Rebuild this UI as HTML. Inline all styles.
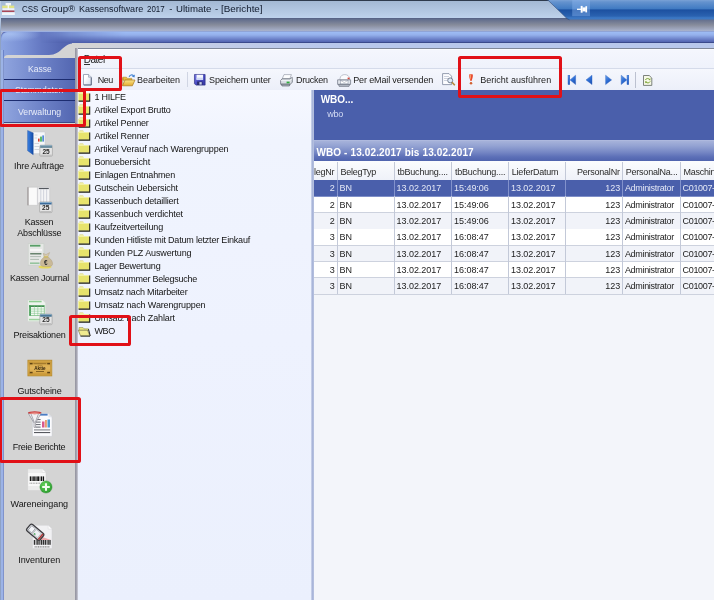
<!DOCTYPE html>
<html><head><meta charset="utf-8"><title>Berichte</title>
<style>
html,body{margin:0;padding:0;}
body{width:714px;height:600px;overflow:hidden;position:relative;background:#fff;font-family:"Liberation Sans",sans-serif;}
.r{position:absolute;}
.t{position:absolute;white-space:nowrap;font-family:"Liberation Sans",sans-serif;}
svg{position:absolute;overflow:visible;}
.red{position:absolute;border:3px solid #e11017;border-radius:2.6px;box-sizing:border-box;}
#w{position:absolute;left:0;top:0;width:714px;height:600px;overflow:hidden;will-change:transform;}
</style></head><body><div id="w">
<div class="r" style="left:0px;top:0px;width:714px;height:19px;background:linear-gradient(#a2b7d2,#bfd3ed);"></div>
<div class="r" style="left:0px;top:0px;width:714px;height:1px;background:#2e3a4c;"></div>
<div class="r" style="left:0px;top:18px;width:714px;height:1px;background:#586486;"></div>
<div class="r" style="left:0px;top:19px;width:714px;height:20px;background:linear-gradient(#5f6b8c 0,#878c9c 6px,#a9b3ce 12px);"></div>
<div class="r" style="left:0px;top:1px;width:1.3px;height:599px;background:linear-gradient(#b9cbe4 0,#b9cbe4 18px,#8fa2c4 32px);"></div>
<div class="r" style="left:1px;top:31px;width:713px;height:569px;background:#5466b2;border-top-left-radius:6px;"></div>
<div class="r" style="left:1px;top:31.5px;width:90px;height:28px;background:linear-gradient(90deg,#8ea6e2 0,#7b92d6 22%,#6478c2 45%,#5466b2 68%,#5062ae 85%,rgba(84,102,178,0) 100%);border-top-left-radius:6px;"></div>
<div class="r" style="left:1.5px;top:32px;width:40px;height:10px;background:radial-gradient(ellipse at 20% 20%,rgba(175,200,245,.75),rgba(160,185,240,0) 70%);border-top-left-radius:6px;"></div>
<div class="r" style="left:40px;top:31px;width:674px;height:12px;background:linear-gradient(#8fa3d4 0px,#9ebcf4 1px,#94b0ec 4px,#5a6cb8 10px,#4d5ea8 12px);-webkit-mask-image:linear-gradient(90deg,transparent 0,rgba(0,0,0,.55) 30px,#000 85px);mask-image:linear-gradient(90deg,transparent 0,rgba(0,0,0,.55) 30px,#000 85px);"></div>
<div class="r" style="left:76px;top:41.8px;width:638px;height:1px;background:#3b4a8c;-webkit-mask-image:linear-gradient(90deg,transparent 0,#000 150px);mask-image:linear-gradient(90deg,transparent 0,#000 150px);"></div>
<div class="r" style="left:1px;top:31px;width:713px;height:1px;background:linear-gradient(90deg,#a8bce8,#8fa3d4 30%);border-top-left-radius:6px;opacity:.9"></div>
<div class="r" style="left:72px;top:42.8px;width:642px;height:5.4px;background:linear-gradient(90deg,#d4d4d8 0,#c4cde6 120px,#b9c8ec 260px);"></div>
<div class="r" style="left:1.3px;top:50px;width:2.9px;height:550px;background:linear-gradient(90deg,#9cb3e6 0,#9cb3e6 62%,#6b83c9 72%);"></div>
<svg style="left:540px;top:0" width="174" height="22" viewBox="0 0 174 22"><defs><linearGradient id="tb" x1="0" y1="0" x2="0" y2="1"><stop offset="0" stop-color="#7aa2d6"/><stop offset="0.1" stop-color="#6492ce"/><stop offset="0.46" stop-color="#3f7ac2"/><stop offset="0.5" stop-color="#1c50a0"/><stop offset="0.82" stop-color="#2a62b0"/><stop offset="0.9" stop-color="#3a76c2"/><stop offset="1" stop-color="#3f7ac4"/></linearGradient></defs><path d="M7,0 L174,0 L174,19.6 L29.5,19.6 C28,19.6 27.6,19 26.8,18.2 L8.4,0.4 Z" fill="url(#tb)"/><path d="M6,0 L8,0.2 L27,18.6 L29.5,19.8" fill="none" stroke="#27406e" stroke-width="1" opacity=".55"/><rect x="32.2" y="0" width="17.8" height="16.2" fill="#8ab4ee" opacity=".42"/><path d="M37,9.3 h4" stroke="#fff" stroke-width="1.3" fill="none"/><rect x="40.7" y="5.9" width="1.9" height="6.8" fill="#fff"/><rect x="42.4" y="7.4" width="3.4" height="4" fill="#fff"/><rect x="45.4" y="6.2" width="1.7" height="6.2" fill="#fff"/></svg>
<svg style="left:0;top:0" width="18" height="18" viewBox="0 0 18 18"><rect x="5.6" y="3" width="5.4" height="2.6" fill="#fbfcfd" opacity=".9"/><rect x="2.2" y="5.6" width="12" height="2.6" fill="#e4e680" opacity=".95"/><rect x="7.6" y="5" width="1.4" height="5" fill="#fff" opacity=".8"/><rect x="2.4" y="8.2" width="12" height="2.2" fill="#f4f6f9" opacity=".9"/><rect x="2" y="10.5" width="12.4" height="1.6" fill="#a83848" opacity=".9"/><rect x="2" y="12.3" width="12.8" height="2.7" fill="#f6f8fb" opacity=".92"/></svg>
<span class="t" style="left:21.70px;top:3.77px;font-size:9.6px;line-height:9.6px;color:#101a2c;transform:scaleX(0.8258);transform-origin:0 0;">CSS</span>
<span class="t" style="left:41.00px;top:3.77px;font-size:9.6px;line-height:9.6px;color:#101a2c;transform:scaleX(1.0162);transform-origin:0 0;">Group®</span>
<span class="t" style="left:78.80px;top:3.77px;font-size:9.6px;line-height:9.6px;color:#101a2c;transform:scaleX(0.9399);transform-origin:0 0;">Kassensoftware</span>
<span class="t" style="left:147.40px;top:3.77px;font-size:9.6px;line-height:9.6px;color:#101a2c;transform:scaleX(0.8241);transform-origin:0 0;">2017</span>
<span class="t" style="left:169.30px;top:3.77px;font-size:9.6px;line-height:9.6px;color:#101a2c;">-</span>
<span class="t" style="left:175.80px;top:3.77px;font-size:9.6px;line-height:9.6px;color:#101a2c;transform:scaleX(1.0026);transform-origin:0 0;">Ultimate</span>
<span class="t" style="left:215.00px;top:3.77px;font-size:9.6px;line-height:9.6px;color:#101a2c;">-</span>
<span class="t" style="left:221.00px;top:3.77px;font-size:9.6px;line-height:9.6px;color:#101a2c;transform:scaleX(1.0258);transform-origin:0 0;">[Berichte]</span>
<svg style="left:0;top:0" width="100" height="600" viewBox="0 0 100 600"><path d="M3.8,600 L3.8,59 Q3.8,55 8,55 L49,55 C62,55 62,43.3 75,43.3 L100,43.3 L100,600 Z" fill="#d4d4d4"/></svg>
<div class="r" style="left:4px;top:58px;width:71px;height:21px;background:linear-gradient(90deg,#8fa4de,#6f84c9 50%,#5366b1);"></div>
<span class="t" style="left:27.80px;top:63.91px;font-size:9.5px;line-height:9.5px;color:#e9edf9;transform:scaleX(0.9014);transform-origin:0 0;">Kasse</span>
<div class="r" style="left:4px;top:79px;width:71px;height:1px;background:#1c2c70;"></div>
<div class="r" style="left:4px;top:80px;width:71px;height:20px;background:linear-gradient(90deg,#8fa4de,#6f84c9 50%,#5366b1);"></div>
<span class="t" style="left:15.30px;top:84.91px;font-size:9.5px;line-height:9.5px;color:#e9edf9;transform:scaleX(0.8949);transform-origin:0 0;">Stammdaten</span>
<div class="r" style="left:4px;top:100px;width:71px;height:1px;background:#1c2c70;"></div>
<div class="r" style="left:4px;top:101px;width:71px;height:22px;background:linear-gradient(90deg,#8fa4de,#6f84c9 50%,#5366b1);"></div>
<span class="t" style="left:18.20px;top:107.41px;font-size:9.5px;line-height:9.5px;color:#e9edf9;transform:scaleX(0.9169);transform-origin:0 0;">Verwaltung</span>
<div class="r" style="left:4px;top:122px;width:71px;height:1px;background:#3a4a8a;"></div>
<span class="t" style="left:14.00px;top:162.38px;font-size:9px;line-height:9px;color:#141414;letter-spacing:-0.118px;">Ihre Aufträge</span>
<span class="t" style="left:24.70px;top:218.38px;font-size:9px;line-height:9px;color:#141414;letter-spacing:-0.237px;">Kassen</span>
<span class="t" style="left:17.30px;top:229.38px;font-size:9px;line-height:9px;color:#141414;letter-spacing:-0.202px;">Abschlüsse</span>
<span class="t" style="left:10.00px;top:274.38px;font-size:9px;line-height:9px;color:#141414;letter-spacing:-0.217px;">Kassen Journal</span>
<span class="t" style="left:13.50px;top:331.38px;font-size:9px;line-height:9px;color:#141414;letter-spacing:-0.195px;">Preisaktionen</span>
<span class="t" style="left:17.50px;top:387.38px;font-size:9px;line-height:9px;color:#141414;letter-spacing:-0.153px;">Gutscheine</span>
<span class="t" style="left:12.75px;top:443.08px;font-size:9px;line-height:9px;color:#141414;letter-spacing:-0.252px;">Freie Berichte</span>
<span class="t" style="left:10.55px;top:499.88px;font-size:9px;line-height:9px;color:#141414;letter-spacing:-0.059px;">Wareneingang</span>
<span class="t" style="left:18.20px;top:555.88px;font-size:9px;line-height:9px;color:#141414;letter-spacing:-0.053px;">Inventuren</span>
<svg style="left:0;top:0" width="80" height="600" viewBox="0 0 80 600"><defs><linearGradient id="bf" x1="0" y1="0" x2="1" y2="0"><stop offset="0" stop-color="#3b82e2"/><stop offset="1" stop-color="#124aa8"/></linearGradient></defs><path d="M33,132 L45,132 L45,153.6 L33,153.6 Z" fill="#f6f7f9" stroke="#c4c8d0" stroke-width="0.5"/><path d="M34.5,135 H37.5 M34.5,138 H37 M34.5,143.5 H39 M34.5,146.5 H39 M34.5,149.5 H39" stroke="#c9ccd4" stroke-width="0.8"/><rect x="38" y="138.6" width="1.6" height="3" fill="#d6402c"/><rect x="40.2" y="136.6" width="1.6" height="5" fill="#3cae48"/><rect x="42.4" y="135.4" width="1.4" height="6.2" fill="#2f72d0"/><path d="M27.6,130.5 L33.2,132.9 L33.2,154.7 L27.6,150.7 Z" fill="url(#bf)" stroke="#1a4a9c" stroke-width="0.4"/><g transform="translate(39.8,144.8)"><rect x="0" y="0.4" width="12.6" height="11.0" rx="1" fill="#e4e4e4" stroke="#9a9a9a" stroke-width="0.6"/><rect x="0.4" y="0.6" width="11.799999999999999" height="2.4" fill="#5a7f92"/><rect x="0.4" y="0.6" width="11.799999999999999" height="0.9" fill="#9fc0d8" opacity=".8"/><rect x="0.6" y="9.8" width="11.4" height="1.2" fill="#bdbdbd"/><text x="6.3" y="9.2" font-family="Liberation Sans" font-weight="bold" font-size="6.6" text-anchor="middle" fill="#2a2a2a">25</text></g><path d="M27.8,187.2 L37.5,187.2 L37.5,205.3 L27.8,205.3 Z" fill="#fafafa" stroke="#bdbdbd" stroke-width="0.5"/><path d="M28,187.2 L28,205.3" stroke="#8c8484" stroke-width="1"/><path d="M37.5,187.2 L49.7,187.2 L49.7,203 L37.5,203 Z" fill="#f4f4f6" stroke="#c0c0c4" stroke-width="0.5"/><rect x="38.8" y="187.9" width="10" height="1.2" fill="#55595f"/><path d="M40.8,189.2 V202 M43.6,189.2 V202 M46.6,189.2 V202" stroke="#c3c7d2" stroke-width="0.7"/><path d="M37.5,187.4 L37.5,205" stroke="#d4d4d8" stroke-width="1.2"/><g transform="translate(39.6,201.5)"><rect x="0" y="0.4" width="12.4" height="10.7" rx="1" fill="#e4e4e4" stroke="#9a9a9a" stroke-width="0.6"/><rect x="0.4" y="0.6" width="11.6" height="2.4" fill="#3b6c9c"/><rect x="0.4" y="0.6" width="11.6" height="0.9" fill="#9fc0d8" opacity=".8"/><rect x="0.6" y="9.5" width="11.200000000000001" height="1.2" fill="#bdbdbd"/><text x="6.2" y="8.899999999999999" font-family="Liberation Sans" font-weight="bold" font-size="6.6" text-anchor="middle" fill="#2a2a2a">25</text></g><rect x="28.2" y="243.8" width="15.7" height="21.3" fill="#e6e8e6" stroke="#c4ccc4" stroke-width="0.5"/><rect x="30" y="244.8" width="10.4" height="1.8" fill="#3e9250" opacity=".85"/><rect x="30" y="249" width="12" height="2.2" fill="#f6f6f6"/><rect x="30.2" y="253" width="11.2" height="1.5" fill="#4a6a50" opacity=".8"/><path d="M30.2,256.6 H41 M30.2,259.4 H39" stroke="#a9b5ab" stroke-width="0.9"/><rect x="30" y="262.6" width="9.5" height="1.1" fill="#56a866" opacity=".8"/><ellipse cx="45" cy="267" rx="6.6" ry="1.6" fill="#e6d85a"/><path d="M44.6,257 C41.5,258.4 39.8,262 40.6,264.6 C41.2,266.4 43,266.6 46.4,266.6 C49.8,266.6 52,266.4 52.5,264.4 C53,261.6 50.4,258.2 47.6,257 Z" fill="#c9b998" stroke="#a8977a" stroke-width="0.4"/><path d="M44.4,256.8 L43.2,253.4 L46,254.6 L49.6,252.6 L47.8,256.8 Z" fill="#d8cbb0" stroke="#a8977a" stroke-width="0.4"/><rect x="43.8" y="256.4" width="4.4" height="1" fill="#d9c24e"/><text x="45.8" y="264.6" font-family="Liberation Sans" font-weight="bold" font-size="6.4" text-anchor="middle" fill="#2c2c2c">€</text><path d="M27.9,300 L42.6,300 L45.7,303 L45.7,321.5 L27.9,321.5 Z" fill="#eef3ee" stroke="#cdd6cd" stroke-width="0.5"/><rect x="29" y="300.8" width="12.6" height="1.5" fill="#8fce92"/><rect x="29" y="318.8" width="14" height="1.5" fill="#9bd29c"/><rect x="29.4" y="305.6" width="14.8" height="10" fill="#f4faf4" stroke="#5cae66" stroke-width="0.6"/><rect x="29.4" y="305.6" width="14.8" height="1.3" fill="#2f7e40"/><rect x="29.4" y="305.6" width="1.5" height="10" fill="#3c9650"/><path d="M29.4,309 H44.2 M29.4,311.2 H44.2 M29.4,313.4 H44.2 M34.4,305.6 V315.6 M37.8,305.6 V315.6 M41.2,305.6 V315.6" stroke="#7cc084" stroke-width="0.5"/><g transform="translate(39.8,313.7)"><rect x="0" y="0.4" width="12.3" height="10.6" rx="1" fill="#e4e4e4" stroke="#9a9a9a" stroke-width="0.6"/><rect x="0.4" y="0.6" width="11.5" height="2.4" fill="#3b6b8c"/><rect x="0.4" y="0.6" width="11.5" height="0.9" fill="#9fc0d8" opacity=".8"/><rect x="0.6" y="9.4" width="11.100000000000001" height="1.2" fill="#bdbdbd"/><text x="6.15" y="8.8" font-family="Liberation Sans" font-weight="bold" font-size="6.6" text-anchor="middle" fill="#2a2a2a">25</text></g><defs><linearGradient id="gv" x1="0" y1="0" x2="0" y2="1"><stop offset="0" stop-color="#cfa040"/><stop offset="0.5" stop-color="#e2b65a"/><stop offset="1" stop-color="#cf9c3a"/></linearGradient></defs><rect x="27.9" y="360.2" width="23.9" height="15.7" fill="url(#gv)" stroke="#b98c2c" stroke-width="0.8"/><rect x="29.4" y="362.2" width="20.9" height="11.8" fill="none" stroke="#b88a2e" stroke-width="0.5"/><path d="M33.4,363.7 H46.4" stroke="#7a5818" stroke-width="0.7"/><path d="M37.6,365.3 H42.4" stroke="#8a6420" stroke-width="0.5"/><text x="39.9" y="370" font-family="Liberation Sans" font-weight="bold" font-size="4.6" text-anchor="middle" fill="#2c1e0a">Aktie</text><path d="M36,371.5 H44" stroke="#6e4e16" stroke-width="0.8"/><g fill="#5e4212"><rect x="29.8" y="362.9" width="2.8" height="1.5"/><rect x="47.2" y="362.9" width="2.8" height="1.5"/><rect x="29.8" y="371.8" width="2.8" height="1.5"/><rect x="47.2" y="371.8" width="2.8" height="1.5"/></g><path d="M32.5,413.6 L48.4,413.6 L52,417.2 L52,436.3 L32.5,436.3 Z" fill="#fbfbfd" stroke="#c8ccd4" stroke-width="0.5"/><path d="M48.4,413.6 L48.4,417.2 L52,417.2 Z" fill="#e2e4ea"/><rect x="40" y="413.8" width="7.6" height="1.8" fill="#4a7cc4"/><rect x="42" y="421.5" width="2.5" height="6" fill="#d85a8c"/><rect x="45" y="420" width="1.9" height="7.5" fill="#e8a070"/><rect x="47.5" y="419.5" width="2.5" height="8" fill="#4a9ad2"/><path d="M35.6,419.6 H40.6 M35.6,422.1 H40.6 M35.6,424.6 H40.6 M35.6,427.1 H40.6" stroke="#50545c" stroke-width="0.9"/><rect x="34" y="429.2" width="16.2" height="1.4" fill="#9a9ca2"/><rect x="34" y="432" width="16.2" height="1.1" fill="#585a60"/><path d="M28.2,413 L41.2,413 L35.6,423 L35.6,427.4 L34,427.4 L34,423 Z" fill="#f1f1f4" stroke="#7c7c86" stroke-width="0.6"/><path d="M31,414 L34.4,422.6 M38.4,414 L35.2,422.6" stroke="#8a8a94" stroke-width="0.7"/><ellipse cx="34.7" cy="412.8" rx="6.8" ry="1.5" fill="#cc3c3c"/><ellipse cx="34.7" cy="413.1" rx="5" ry="0.7" fill="#f0b0a8"/><path d="M27.6,468.7 L42.2,468.7 L46,472.5 L46,490.6 L27.6,490.6 Z" fill="#ececec" stroke="#cfcfcf" stroke-width="0.5"/><path d="M28.4,473 L45.4,473 L45.4,486 L28.4,486 Z" fill="#f8f8f8"/><path d="M42.2,468.7 L42.2,472.5 L46,472.5 Z" fill="#fafafa" stroke="#d4d4d4" stroke-width="0.4"/><g fill="#121212"><rect x="29.8" y="476.4" width="1.5" height="4.6"/><rect x="31.8" y="476.4" width="0.8" height="4.6"/><rect x="33.2" y="476.4" width="1.6" height="4.6"/><rect x="35.4" y="476.4" width="1.2" height="4.6"/><rect x="37.2" y="476.4" width="1.8" height="4.6"/><rect x="39.6" y="476.4" width="0.8" height="4.6"/><rect x="41" y="476.4" width="1.2" height="4.6"/><rect x="42.8" y="476.4" width="1.3" height="4.6"/></g><path d="M29.6,483.2 H40" stroke="#8c8c8c" stroke-width="1" stroke-dasharray="0.9,0.7"/><defs><radialGradient id="gp" cx="0.4" cy="0.35" r="0.7"><stop offset="0" stop-color="#6ad45e"/><stop offset="1" stop-color="#279a2c"/></radialGradient></defs><circle cx="46" cy="487" r="6.1" fill="url(#gp)" stroke="#2a8a2e" stroke-width="0.4"/><path d="M46,483.2 V490.8 M42.2,487 H49.8" stroke="#f2fbf0" stroke-width="2"/><path d="M32.5,525.3 L48.2,525.3 L52,529.1 L52,548.6 L32.5,548.6 Z" fill="#f1f1f3" stroke="#d0d0d4" stroke-width="0.5"/><path d="M48.2,525.3 L48.2,529.1 L52,529.1 Z" fill="#fdfdfd" stroke="#d4d4d8" stroke-width="0.4"/><path d="M39.5,536 L51,540 L35,540 Z" fill="#e88c8c" opacity=".7"/><g fill="#303030"><rect x="33.8" y="540" width="1.3" height="4.8"/><rect x="35.8" y="540" width="0.8" height="4.8"/><rect x="37.2" y="540" width="1.4" height="4.8"/><rect x="39.2" y="540" width="0.7" height="4.8"/><rect x="40.6" y="540" width="1.8" height="4.8"/><rect x="43" y="540" width="1" height="4.8"/><rect x="44.6" y="540" width="1.6" height="4.8"/><rect x="46.8" y="540" width="0.8" height="4.8"/><rect x="48.2" y="540" width="1.5" height="4.8"/><rect x="50.2" y="540" width="0.7" height="4.8"/></g><path d="M34.6,546.8 H50" stroke="#808080" stroke-width="1.2" stroke-dasharray="1.1,0.6"/><g transform="translate(35.2,532.2) rotate(40)"><rect x="-8.6" y="-4.3" width="17.2" height="8.6" rx="2" fill="#dfe3e8" stroke="#3c3c40" stroke-width="1.3"/><rect x="-6.8" y="-2.8" width="4.6" height="5.6" fill="#f4f6fa" stroke="#6a6a70" stroke-width="0.5"/><rect x="-1" y="-2.8" width="6.4" height="5.6" fill="#eef0f4" stroke="#8a8a90" stroke-width="0.4"/><rect x="0" y="1" width="1.6" height="1.4" fill="#3ca04a"/><rect x="6.2" y="-3.6" width="1.6" height="7.2" fill="#b03a3a"/></g></svg>
<div class="r" style="left:76px;top:48px;width:638px;height:552px;background:#fbfcff;"></div>
<div class="r" style="left:76px;top:47.5px;width:638px;height:1.4px;background:#80889a;"></div>
<div class="r" style="left:75.3px;top:48px;width:2.3px;height:552px;background:linear-gradient(90deg,#92929e 0,#adadb8 70%,#d8dae8 100%);"></div>
<div class="r" style="left:77.5px;top:49px;width:636.5px;height:19px;background:linear-gradient(#ffffff 0,#f4f6fd 1.5px,#eff2fb 100%);"></div>
<span class="t" style="left:83.70px;top:54.73px;font-size:10px;line-height:10px;color:#1a1a1a;letter-spacing:-0.469px;">Datei</span>
<div class="r" style="left:83.8px;top:63.8px;width:6px;height:1px;background:#333;"></div>
<div class="r" style="left:77.5px;top:68px;width:636.5px;height:1px;background:#d5dbea;"></div>
<div class="r" style="left:77.5px;top:69px;width:636.5px;height:21px;background:linear-gradient(#f5f7fd,#eceff9);"></div>
<div class="r" style="left:77.5px;top:89.6px;width:636.5px;height:0.8px;background:#dfe4f2;"></div>
<span class="t" style="left:97.70px;top:75.78px;font-size:9px;line-height:9px;color:#222;letter-spacing:-0.437px;">Neu</span>
<span class="t" style="left:137.00px;top:75.78px;font-size:9px;line-height:9px;color:#222;letter-spacing:-0.053px;">Bearbeiten</span>
<div class="r" style="left:186.6px;top:72px;width:1.4px;height:15px;background:#d0d5e3;"></div>
<span class="t" style="left:209.00px;top:75.78px;font-size:9px;line-height:9px;color:#222;letter-spacing:-0.123px;">Speichern unter</span>
<span class="t" style="left:295.90px;top:75.78px;font-size:9px;line-height:9px;color:#222;letter-spacing:-0.216px;">Drucken</span>
<span class="t" style="left:353.20px;top:75.78px;font-size:9px;line-height:9px;color:#222;letter-spacing:-0.134px;">Per eMail versenden</span>
<span class="t" style="left:480.20px;top:75.78px;font-size:9px;line-height:9px;color:#222;letter-spacing:0.027px;">Bericht ausführen</span>
<div class="r" style="left:635px;top:71.6px;width:1.1px;height:16px;background:#bcc1d0;"></div>
<div class="r" style="left:77.5px;top:90.3px;width:234px;height:509.7px;background:linear-gradient(#f6f8ff 0,#f0f4fe 50px,#eef2fe 250px,#ebf0fd 100%);"></div>
<div class="r" style="left:311px;top:90.3px;width:3px;height:509.7px;background:linear-gradient(90deg,#cfd8ee,#a9b5d9 50%,#b7c2e0);"></div>
<span class="t" style="left:94.40px;top:92.68px;font-size:9px;line-height:9px;color:#141414;letter-spacing:-0.245px;">1 HILFE</span>
<svg style="left:77.6px;top:90.60px" width="12.4" height="10.6" viewBox="0 0 12.4 10.6"><path d="M0.9,2.4 L1.7,0.5 L5.2,0.5 L6.3,2.2 Z" fill="#f1eea2"/><path d="M0.2,2.1 L11.3,2.1 L11.3,9.8 L0.2,9.8 Z" fill="#e7e36c"/><path d="M0.5,9.6 L0.5,2.5 L11,2.5" fill="none" stroke="#f5f3b8" stroke-width="0.7"/><path d="M1,1.6 L1.8,0.5 L5.1,0.5" fill="none" stroke="#d9d59a" stroke-width="0.5"/><path d="M11.7,2.6 L11.7,10.1 L0.6,10.1" fill="none" stroke="#1c1c14" stroke-width="1.1"/></svg>
<span class="t" style="left:94.40px;top:105.71px;font-size:9px;line-height:9px;color:#141414;letter-spacing:-0.182px;">Artikel Export Brutto</span>
<svg style="left:77.6px;top:103.63px" width="12.4" height="10.6" viewBox="0 0 12.4 10.6"><path d="M0.9,2.4 L1.7,0.5 L5.2,0.5 L6.3,2.2 Z" fill="#f1eea2"/><path d="M0.2,2.1 L11.3,2.1 L11.3,9.8 L0.2,9.8 Z" fill="#e7e36c"/><path d="M0.5,9.6 L0.5,2.5 L11,2.5" fill="none" stroke="#f5f3b8" stroke-width="0.7"/><path d="M1,1.6 L1.8,0.5 L5.1,0.5" fill="none" stroke="#d9d59a" stroke-width="0.5"/><path d="M11.7,2.6 L11.7,10.1 L0.6,10.1" fill="none" stroke="#1c1c14" stroke-width="1.1"/></svg>
<span class="t" style="left:94.40px;top:118.74px;font-size:9px;line-height:9px;color:#141414;letter-spacing:-0.159px;">Artikel Penner</span>
<svg style="left:77.6px;top:116.66px" width="12.4" height="10.6" viewBox="0 0 12.4 10.6"><path d="M0.9,2.4 L1.7,0.5 L5.2,0.5 L6.3,2.2 Z" fill="#f1eea2"/><path d="M0.2,2.1 L11.3,2.1 L11.3,9.8 L0.2,9.8 Z" fill="#e7e36c"/><path d="M0.5,9.6 L0.5,2.5 L11,2.5" fill="none" stroke="#f5f3b8" stroke-width="0.7"/><path d="M1,1.6 L1.8,0.5 L5.1,0.5" fill="none" stroke="#d9d59a" stroke-width="0.5"/><path d="M11.7,2.6 L11.7,10.1 L0.6,10.1" fill="none" stroke="#1c1c14" stroke-width="1.1"/></svg>
<span class="t" style="left:94.40px;top:131.77px;font-size:9px;line-height:9px;color:#141414;letter-spacing:-0.159px;">Artikel Renner</span>
<svg style="left:77.6px;top:129.69px" width="12.4" height="10.6" viewBox="0 0 12.4 10.6"><path d="M0.9,2.4 L1.7,0.5 L5.2,0.5 L6.3,2.2 Z" fill="#f1eea2"/><path d="M0.2,2.1 L11.3,2.1 L11.3,9.8 L0.2,9.8 Z" fill="#e7e36c"/><path d="M0.5,9.6 L0.5,2.5 L11,2.5" fill="none" stroke="#f5f3b8" stroke-width="0.7"/><path d="M1,1.6 L1.8,0.5 L5.1,0.5" fill="none" stroke="#d9d59a" stroke-width="0.5"/><path d="M11.7,2.6 L11.7,10.1 L0.6,10.1" fill="none" stroke="#1c1c14" stroke-width="1.1"/></svg>
<span class="t" style="left:94.40px;top:144.80px;font-size:9px;line-height:9px;color:#141414;letter-spacing:-0.098px;">Artikel Verauf nach Warengruppen</span>
<svg style="left:77.6px;top:142.72px" width="12.4" height="10.6" viewBox="0 0 12.4 10.6"><path d="M0.9,2.4 L1.7,0.5 L5.2,0.5 L6.3,2.2 Z" fill="#f1eea2"/><path d="M0.2,2.1 L11.3,2.1 L11.3,9.8 L0.2,9.8 Z" fill="#e7e36c"/><path d="M0.5,9.6 L0.5,2.5 L11,2.5" fill="none" stroke="#f5f3b8" stroke-width="0.7"/><path d="M1,1.6 L1.8,0.5 L5.1,0.5" fill="none" stroke="#d9d59a" stroke-width="0.5"/><path d="M11.7,2.6 L11.7,10.1 L0.6,10.1" fill="none" stroke="#1c1c14" stroke-width="1.1"/></svg>
<span class="t" style="left:94.40px;top:157.83px;font-size:9px;line-height:9px;color:#141414;letter-spacing:-0.149px;">Bonuebersicht</span>
<svg style="left:77.6px;top:155.75px" width="12.4" height="10.6" viewBox="0 0 12.4 10.6"><path d="M0.9,2.4 L1.7,0.5 L5.2,0.5 L6.3,2.2 Z" fill="#f1eea2"/><path d="M0.2,2.1 L11.3,2.1 L11.3,9.8 L0.2,9.8 Z" fill="#e7e36c"/><path d="M0.5,9.6 L0.5,2.5 L11,2.5" fill="none" stroke="#f5f3b8" stroke-width="0.7"/><path d="M1,1.6 L1.8,0.5 L5.1,0.5" fill="none" stroke="#d9d59a" stroke-width="0.5"/><path d="M11.7,2.6 L11.7,10.1 L0.6,10.1" fill="none" stroke="#1c1c14" stroke-width="1.1"/></svg>
<span class="t" style="left:94.40px;top:170.86px;font-size:9px;line-height:9px;color:#141414;letter-spacing:-0.165px;">Einlagen Entnahmen</span>
<svg style="left:77.6px;top:168.78px" width="12.4" height="10.6" viewBox="0 0 12.4 10.6"><path d="M0.9,2.4 L1.7,0.5 L5.2,0.5 L6.3,2.2 Z" fill="#f1eea2"/><path d="M0.2,2.1 L11.3,2.1 L11.3,9.8 L0.2,9.8 Z" fill="#e7e36c"/><path d="M0.5,9.6 L0.5,2.5 L11,2.5" fill="none" stroke="#f5f3b8" stroke-width="0.7"/><path d="M1,1.6 L1.8,0.5 L5.1,0.5" fill="none" stroke="#d9d59a" stroke-width="0.5"/><path d="M11.7,2.6 L11.7,10.1 L0.6,10.1" fill="none" stroke="#1c1c14" stroke-width="1.1"/></svg>
<span class="t" style="left:94.40px;top:183.89px;font-size:9px;line-height:9px;color:#141414;letter-spacing:-0.122px;">Gutschein Uebersicht</span>
<svg style="left:77.6px;top:181.81px" width="12.4" height="10.6" viewBox="0 0 12.4 10.6"><path d="M0.9,2.4 L1.7,0.5 L5.2,0.5 L6.3,2.2 Z" fill="#f1eea2"/><path d="M0.2,2.1 L11.3,2.1 L11.3,9.8 L0.2,9.8 Z" fill="#e7e36c"/><path d="M0.5,9.6 L0.5,2.5 L11,2.5" fill="none" stroke="#f5f3b8" stroke-width="0.7"/><path d="M1,1.6 L1.8,0.5 L5.1,0.5" fill="none" stroke="#d9d59a" stroke-width="0.5"/><path d="M11.7,2.6 L11.7,10.1 L0.6,10.1" fill="none" stroke="#1c1c14" stroke-width="1.1"/></svg>
<span class="t" style="left:94.40px;top:196.92px;font-size:9px;line-height:9px;color:#141414;letter-spacing:-0.180px;">Kassenbuch detailliert</span>
<svg style="left:77.6px;top:194.84px" width="12.4" height="10.6" viewBox="0 0 12.4 10.6"><path d="M0.9,2.4 L1.7,0.5 L5.2,0.5 L6.3,2.2 Z" fill="#f1eea2"/><path d="M0.2,2.1 L11.3,2.1 L11.3,9.8 L0.2,9.8 Z" fill="#e7e36c"/><path d="M0.5,9.6 L0.5,2.5 L11,2.5" fill="none" stroke="#f5f3b8" stroke-width="0.7"/><path d="M1,1.6 L1.8,0.5 L5.1,0.5" fill="none" stroke="#d9d59a" stroke-width="0.5"/><path d="M11.7,2.6 L11.7,10.1 L0.6,10.1" fill="none" stroke="#1c1c14" stroke-width="1.1"/></svg>
<span class="t" style="left:94.40px;top:209.95px;font-size:9px;line-height:9px;color:#141414;letter-spacing:-0.117px;">Kassenbuch verdichtet</span>
<svg style="left:77.6px;top:207.87px" width="12.4" height="10.6" viewBox="0 0 12.4 10.6"><path d="M0.9,2.4 L1.7,0.5 L5.2,0.5 L6.3,2.2 Z" fill="#f1eea2"/><path d="M0.2,2.1 L11.3,2.1 L11.3,9.8 L0.2,9.8 Z" fill="#e7e36c"/><path d="M0.5,9.6 L0.5,2.5 L11,2.5" fill="none" stroke="#f5f3b8" stroke-width="0.7"/><path d="M1,1.6 L1.8,0.5 L5.1,0.5" fill="none" stroke="#d9d59a" stroke-width="0.5"/><path d="M11.7,2.6 L11.7,10.1 L0.6,10.1" fill="none" stroke="#1c1c14" stroke-width="1.1"/></svg>
<span class="t" style="left:94.40px;top:222.98px;font-size:9px;line-height:9px;color:#141414;letter-spacing:-0.164px;">Kaufzeitverteilung</span>
<svg style="left:77.6px;top:220.90px" width="12.4" height="10.6" viewBox="0 0 12.4 10.6"><path d="M0.9,2.4 L1.7,0.5 L5.2,0.5 L6.3,2.2 Z" fill="#f1eea2"/><path d="M0.2,2.1 L11.3,2.1 L11.3,9.8 L0.2,9.8 Z" fill="#e7e36c"/><path d="M0.5,9.6 L0.5,2.5 L11,2.5" fill="none" stroke="#f5f3b8" stroke-width="0.7"/><path d="M1,1.6 L1.8,0.5 L5.1,0.5" fill="none" stroke="#d9d59a" stroke-width="0.5"/><path d="M11.7,2.6 L11.7,10.1 L0.6,10.1" fill="none" stroke="#1c1c14" stroke-width="1.1"/></svg>
<span class="t" style="left:94.40px;top:236.01px;font-size:9px;line-height:9px;color:#141414;letter-spacing:-0.194px;">Kunden Hitliste mit Datum letzter Einkauf</span>
<svg style="left:77.6px;top:233.93px" width="12.4" height="10.6" viewBox="0 0 12.4 10.6"><path d="M0.9,2.4 L1.7,0.5 L5.2,0.5 L6.3,2.2 Z" fill="#f1eea2"/><path d="M0.2,2.1 L11.3,2.1 L11.3,9.8 L0.2,9.8 Z" fill="#e7e36c"/><path d="M0.5,9.6 L0.5,2.5 L11,2.5" fill="none" stroke="#f5f3b8" stroke-width="0.7"/><path d="M1,1.6 L1.8,0.5 L5.1,0.5" fill="none" stroke="#d9d59a" stroke-width="0.5"/><path d="M11.7,2.6 L11.7,10.1 L0.6,10.1" fill="none" stroke="#1c1c14" stroke-width="1.1"/></svg>
<span class="t" style="left:94.40px;top:249.04px;font-size:9px;line-height:9px;color:#141414;letter-spacing:-0.118px;">Kunden PLZ Auswertung</span>
<svg style="left:77.6px;top:246.96px" width="12.4" height="10.6" viewBox="0 0 12.4 10.6"><path d="M0.9,2.4 L1.7,0.5 L5.2,0.5 L6.3,2.2 Z" fill="#f1eea2"/><path d="M0.2,2.1 L11.3,2.1 L11.3,9.8 L0.2,9.8 Z" fill="#e7e36c"/><path d="M0.5,9.6 L0.5,2.5 L11,2.5" fill="none" stroke="#f5f3b8" stroke-width="0.7"/><path d="M1,1.6 L1.8,0.5 L5.1,0.5" fill="none" stroke="#d9d59a" stroke-width="0.5"/><path d="M11.7,2.6 L11.7,10.1 L0.6,10.1" fill="none" stroke="#1c1c14" stroke-width="1.1"/></svg>
<span class="t" style="left:94.40px;top:262.07px;font-size:9px;line-height:9px;color:#141414;letter-spacing:-0.163px;">Lager Bewertung</span>
<svg style="left:77.6px;top:259.99px" width="12.4" height="10.6" viewBox="0 0 12.4 10.6"><path d="M0.9,2.4 L1.7,0.5 L5.2,0.5 L6.3,2.2 Z" fill="#f1eea2"/><path d="M0.2,2.1 L11.3,2.1 L11.3,9.8 L0.2,9.8 Z" fill="#e7e36c"/><path d="M0.5,9.6 L0.5,2.5 L11,2.5" fill="none" stroke="#f5f3b8" stroke-width="0.7"/><path d="M1,1.6 L1.8,0.5 L5.1,0.5" fill="none" stroke="#d9d59a" stroke-width="0.5"/><path d="M11.7,2.6 L11.7,10.1 L0.6,10.1" fill="none" stroke="#1c1c14" stroke-width="1.1"/></svg>
<span class="t" style="left:94.40px;top:275.10px;font-size:9px;line-height:9px;color:#141414;letter-spacing:-0.259px;">Seriennummer Belegsuche</span>
<svg style="left:77.6px;top:273.02px" width="12.4" height="10.6" viewBox="0 0 12.4 10.6"><path d="M0.9,2.4 L1.7,0.5 L5.2,0.5 L6.3,2.2 Z" fill="#f1eea2"/><path d="M0.2,2.1 L11.3,2.1 L11.3,9.8 L0.2,9.8 Z" fill="#e7e36c"/><path d="M0.5,9.6 L0.5,2.5 L11,2.5" fill="none" stroke="#f5f3b8" stroke-width="0.7"/><path d="M1,1.6 L1.8,0.5 L5.1,0.5" fill="none" stroke="#d9d59a" stroke-width="0.5"/><path d="M11.7,2.6 L11.7,10.1 L0.6,10.1" fill="none" stroke="#1c1c14" stroke-width="1.1"/></svg>
<span class="t" style="left:94.40px;top:288.13px;font-size:9px;line-height:9px;color:#141414;letter-spacing:-0.193px;">Umsatz nach Mitarbeiter</span>
<svg style="left:77.6px;top:286.05px" width="12.4" height="10.6" viewBox="0 0 12.4 10.6"><path d="M0.9,2.4 L1.7,0.5 L5.2,0.5 L6.3,2.2 Z" fill="#f1eea2"/><path d="M0.2,2.1 L11.3,2.1 L11.3,9.8 L0.2,9.8 Z" fill="#e7e36c"/><path d="M0.5,9.6 L0.5,2.5 L11,2.5" fill="none" stroke="#f5f3b8" stroke-width="0.7"/><path d="M1,1.6 L1.8,0.5 L5.1,0.5" fill="none" stroke="#d9d59a" stroke-width="0.5"/><path d="M11.7,2.6 L11.7,10.1 L0.6,10.1" fill="none" stroke="#1c1c14" stroke-width="1.1"/></svg>
<span class="t" style="left:94.40px;top:301.16px;font-size:9px;line-height:9px;color:#141414;letter-spacing:-0.130px;">Umsatz nach Warengruppen</span>
<svg style="left:77.6px;top:299.08px" width="12.4" height="10.6" viewBox="0 0 12.4 10.6"><path d="M0.9,2.4 L1.7,0.5 L5.2,0.5 L6.3,2.2 Z" fill="#f1eea2"/><path d="M0.2,2.1 L11.3,2.1 L11.3,9.8 L0.2,9.8 Z" fill="#e7e36c"/><path d="M0.5,9.6 L0.5,2.5 L11,2.5" fill="none" stroke="#f5f3b8" stroke-width="0.7"/><path d="M1,1.6 L1.8,0.5 L5.1,0.5" fill="none" stroke="#d9d59a" stroke-width="0.5"/><path d="M11.7,2.6 L11.7,10.1 L0.6,10.1" fill="none" stroke="#1c1c14" stroke-width="1.1"/></svg>
<span class="t" style="left:94.40px;top:314.19px;font-size:9px;line-height:9px;color:#141414;letter-spacing:-0.128px;">Umsatz nach Zahlart</span>
<svg style="left:77.6px;top:312.11px" width="12.4" height="10.6" viewBox="0 0 12.4 10.6"><path d="M0.9,2.4 L1.7,0.5 L5.2,0.5 L6.3,2.2 Z" fill="#f1eea2"/><path d="M0.2,2.1 L11.3,2.1 L11.3,9.8 L0.2,9.8 Z" fill="#e7e36c"/><path d="M0.5,9.6 L0.5,2.5 L11,2.5" fill="none" stroke="#f5f3b8" stroke-width="0.7"/><path d="M1,1.6 L1.8,0.5 L5.1,0.5" fill="none" stroke="#d9d59a" stroke-width="0.5"/><path d="M11.7,2.6 L11.7,10.1 L0.6,10.1" fill="none" stroke="#1c1c14" stroke-width="1.1"/></svg>
<span class="t" style="left:94.40px;top:327.22px;font-size:9px;line-height:9px;color:#141414;letter-spacing:-0.299px;">WBO</span>
<svg style="left:77.8px;top:325.94px" width="13" height="11" viewBox="0 0 13 11"><path d="M1,1.5 L5,1.5 L6,2.8 L10.5,2.8 L10.5,4.5 L1,4.5 Z" fill="#e9e47a" stroke="#8a8650" stroke-width="0.5"/><path d="M0.3,4.2 L9.5,4.2 L11.8,9.8 L2.5,9.8 Z" fill="#f0eb90" stroke="#6a6640" stroke-width="0.6"/><path d="M10.5,3.2 L12.2,9.8 L11.8,10.2" fill="none" stroke="#2a2a22" stroke-width="1"/><path d="M2.5,10.2 L12,10.2" fill="none" stroke="#2a2a22" stroke-width="0.9"/></svg>
<div class="r" style="left:313.9px;top:90.2px;width:400.1px;height:49.8px;background:#4a5fab;"></div>
<span class="t" style="left:320.70px;top:94.94px;font-size:10px;line-height:10px;color:#fff;font-weight:bold;letter-spacing:-0.046px;">WBO...</span>
<span class="t" style="left:327.20px;top:110.18px;font-size:9px;line-height:9px;color:#d4dcf4;letter-spacing:-0.170px;">wbo</span>
<div class="r" style="left:313.9px;top:139.6px;width:400.1px;height:1.2px;background:#aeb9de;"></div>
<div class="r" style="left:313.9px;top:140.6px;width:400.1px;height:20.6px;background:linear-gradient(#a6b2da 0,#93a2d2 25%,#7788c5 55%,#5c6fb7 80%,#5064ae 100%);"></div>
<span class="t" style="left:316.40px;top:147.63px;font-size:10px;line-height:10px;color:#fff;font-weight:bold;letter-spacing:0.128px;">WBO - 13.02.2017 bis 13.02.2017</span>
<div class="r" style="left:313.9px;top:161.3px;width:400.1px;height:19px;background:linear-gradient(#fbfcfe,#eff2f9);"></div>
<div class="r" style="left:314px;top:179.8px;width:400px;height:0.7px;background:#c9cfdd;"></div>
<span class="t" style="left:313.97px;top:168.48px;font-size:9px;line-height:9px;color:#2a2a2a;letter-spacing:-0.215px;">legNr</span>
<span class="t" style="left:340.40px;top:168.48px;font-size:9px;line-height:9px;color:#2a2a2a;letter-spacing:-0.235px;">BelegTyp</span>
<span class="t" style="left:397.40px;top:168.48px;font-size:9px;line-height:9px;color:#2a2a2a;letter-spacing:-0.204px;">tbBuchung....</span>
<span class="t" style="left:454.90px;top:168.48px;font-size:9px;line-height:9px;color:#2a2a2a;letter-spacing:-0.204px;">tbBuchung....</span>
<span class="t" style="left:511.80px;top:168.48px;font-size:9px;line-height:9px;color:#2a2a2a;letter-spacing:-0.223px;">LieferDatum</span>
<span class="t" style="left:576.93px;top:168.48px;font-size:9px;line-height:9px;color:#2a2a2a;letter-spacing:-0.225px;">PersonalNr</span>
<span class="t" style="left:625.70px;top:168.48px;font-size:9px;line-height:9px;color:#2a2a2a;letter-spacing:-0.210px;">PersonalNa...</span>
<span class="t" style="left:683.40px;top:168.48px;font-size:9px;line-height:9px;color:#2a2a2a;letter-spacing:-0.239px;">Maschin</span>
<div class="r" style="left:314px;top:294px;width:400px;height:306px;background:#f3f5fa;"></div>
<div class="r" style="left:314px;top:180.40px;width:400px;height:16.3px;background:#4a5fab;"></div>
<div class="r" style="left:314px;top:195.90px;width:400px;height:0.8px;background:#7f8fc8;"></div>
<span class="t" style="left:329.79px;top:184.38px;font-size:9px;line-height:9px;color:#e4e8f6;">2</span>
<span class="t" style="left:339.60px;top:184.38px;font-size:9px;line-height:9px;color:#e4e8f6;letter-spacing:-0.075px;">BN</span>
<span class="t" style="left:396.60px;top:184.38px;font-size:9px;line-height:9px;color:#e4e8f6;letter-spacing:-0.054px;">13.02.2017</span>
<span class="t" style="left:454.10px;top:184.38px;font-size:9px;line-height:9px;color:#e4e8f6;letter-spacing:-0.053px;">15:49:06</span>
<span class="t" style="left:511.00px;top:184.38px;font-size:9px;line-height:9px;color:#e4e8f6;letter-spacing:-0.054px;">13.02.2017</span>
<span class="t" style="left:605.23px;top:184.38px;font-size:9px;line-height:9px;color:#e4e8f6;letter-spacing:-0.050px;">123</span>
<span class="t" style="left:624.90px;top:184.38px;font-size:9px;line-height:9px;color:#e4e8f6;letter-spacing:-0.306px;">Administrator</span>
<span class="t" style="left:682.60px;top:184.38px;font-size:9px;line-height:9px;color:#e4e8f6;letter-spacing:-0.345px;">C01007-</span>
<div class="r" style="left:314px;top:196.70px;width:400px;height:16.3px;background:#ffffff;"></div>
<div class="r" style="left:314px;top:212.20px;width:400px;height:0.8px;background:#cdd2de;"></div>
<span class="t" style="left:329.79px;top:200.68px;font-size:9px;line-height:9px;color:#1c1c1c;">2</span>
<span class="t" style="left:339.60px;top:200.68px;font-size:9px;line-height:9px;color:#1c1c1c;letter-spacing:-0.075px;">BN</span>
<span class="t" style="left:396.60px;top:200.68px;font-size:9px;line-height:9px;color:#1c1c1c;letter-spacing:-0.054px;">13.02.2017</span>
<span class="t" style="left:454.10px;top:200.68px;font-size:9px;line-height:9px;color:#1c1c1c;letter-spacing:-0.053px;">15:49:06</span>
<span class="t" style="left:511.00px;top:200.68px;font-size:9px;line-height:9px;color:#1c1c1c;letter-spacing:-0.054px;">13.02.2017</span>
<span class="t" style="left:605.23px;top:200.68px;font-size:9px;line-height:9px;color:#1c1c1c;letter-spacing:-0.050px;">123</span>
<span class="t" style="left:624.90px;top:200.68px;font-size:9px;line-height:9px;color:#1c1c1c;letter-spacing:-0.306px;">Administrator</span>
<span class="t" style="left:682.60px;top:200.68px;font-size:9px;line-height:9px;color:#1c1c1c;letter-spacing:-0.345px;">C01007-</span>
<div class="r" style="left:314px;top:213.00px;width:400px;height:16.3px;background:#f1f3f9;"></div>
<div class="r" style="left:314px;top:228.50px;width:400px;height:0.8px;background:#cdd2de;"></div>
<span class="t" style="left:329.79px;top:216.98px;font-size:9px;line-height:9px;color:#1c1c1c;">2</span>
<span class="t" style="left:339.60px;top:216.98px;font-size:9px;line-height:9px;color:#1c1c1c;letter-spacing:-0.075px;">BN</span>
<span class="t" style="left:396.60px;top:216.98px;font-size:9px;line-height:9px;color:#1c1c1c;letter-spacing:-0.054px;">13.02.2017</span>
<span class="t" style="left:454.10px;top:216.98px;font-size:9px;line-height:9px;color:#1c1c1c;letter-spacing:-0.053px;">15:49:06</span>
<span class="t" style="left:511.00px;top:216.98px;font-size:9px;line-height:9px;color:#1c1c1c;letter-spacing:-0.054px;">13.02.2017</span>
<span class="t" style="left:605.23px;top:216.98px;font-size:9px;line-height:9px;color:#1c1c1c;letter-spacing:-0.050px;">123</span>
<span class="t" style="left:624.90px;top:216.98px;font-size:9px;line-height:9px;color:#1c1c1c;letter-spacing:-0.306px;">Administrator</span>
<span class="t" style="left:682.60px;top:216.98px;font-size:9px;line-height:9px;color:#1c1c1c;letter-spacing:-0.345px;">C01007-</span>
<div class="r" style="left:314px;top:229.30px;width:400px;height:16.3px;background:#ffffff;"></div>
<div class="r" style="left:314px;top:244.80px;width:400px;height:0.8px;background:#cdd2de;"></div>
<span class="t" style="left:329.79px;top:233.28px;font-size:9px;line-height:9px;color:#1c1c1c;">3</span>
<span class="t" style="left:339.60px;top:233.28px;font-size:9px;line-height:9px;color:#1c1c1c;letter-spacing:-0.075px;">BN</span>
<span class="t" style="left:396.60px;top:233.28px;font-size:9px;line-height:9px;color:#1c1c1c;letter-spacing:-0.054px;">13.02.2017</span>
<span class="t" style="left:454.10px;top:233.28px;font-size:9px;line-height:9px;color:#1c1c1c;letter-spacing:-0.053px;">16:08:47</span>
<span class="t" style="left:511.00px;top:233.28px;font-size:9px;line-height:9px;color:#1c1c1c;letter-spacing:-0.054px;">13.02.2017</span>
<span class="t" style="left:605.23px;top:233.28px;font-size:9px;line-height:9px;color:#1c1c1c;letter-spacing:-0.050px;">123</span>
<span class="t" style="left:624.90px;top:233.28px;font-size:9px;line-height:9px;color:#1c1c1c;letter-spacing:-0.306px;">Administrator</span>
<span class="t" style="left:682.60px;top:233.28px;font-size:9px;line-height:9px;color:#1c1c1c;letter-spacing:-0.345px;">C01007-</span>
<div class="r" style="left:314px;top:245.60px;width:400px;height:16.3px;background:#f1f3f9;"></div>
<div class="r" style="left:314px;top:261.10px;width:400px;height:0.8px;background:#cdd2de;"></div>
<span class="t" style="left:329.79px;top:249.58px;font-size:9px;line-height:9px;color:#1c1c1c;">3</span>
<span class="t" style="left:339.60px;top:249.58px;font-size:9px;line-height:9px;color:#1c1c1c;letter-spacing:-0.075px;">BN</span>
<span class="t" style="left:396.60px;top:249.58px;font-size:9px;line-height:9px;color:#1c1c1c;letter-spacing:-0.054px;">13.02.2017</span>
<span class="t" style="left:454.10px;top:249.58px;font-size:9px;line-height:9px;color:#1c1c1c;letter-spacing:-0.053px;">16:08:47</span>
<span class="t" style="left:511.00px;top:249.58px;font-size:9px;line-height:9px;color:#1c1c1c;letter-spacing:-0.054px;">13.02.2017</span>
<span class="t" style="left:605.23px;top:249.58px;font-size:9px;line-height:9px;color:#1c1c1c;letter-spacing:-0.050px;">123</span>
<span class="t" style="left:624.90px;top:249.58px;font-size:9px;line-height:9px;color:#1c1c1c;letter-spacing:-0.306px;">Administrator</span>
<span class="t" style="left:682.60px;top:249.58px;font-size:9px;line-height:9px;color:#1c1c1c;letter-spacing:-0.345px;">C01007-</span>
<div class="r" style="left:314px;top:261.90px;width:400px;height:16.3px;background:#ffffff;"></div>
<div class="r" style="left:314px;top:277.40px;width:400px;height:0.8px;background:#cdd2de;"></div>
<span class="t" style="left:329.79px;top:265.88px;font-size:9px;line-height:9px;color:#1c1c1c;">3</span>
<span class="t" style="left:339.60px;top:265.88px;font-size:9px;line-height:9px;color:#1c1c1c;letter-spacing:-0.075px;">BN</span>
<span class="t" style="left:396.60px;top:265.88px;font-size:9px;line-height:9px;color:#1c1c1c;letter-spacing:-0.054px;">13.02.2017</span>
<span class="t" style="left:454.10px;top:265.88px;font-size:9px;line-height:9px;color:#1c1c1c;letter-spacing:-0.053px;">16:08:47</span>
<span class="t" style="left:511.00px;top:265.88px;font-size:9px;line-height:9px;color:#1c1c1c;letter-spacing:-0.054px;">13.02.2017</span>
<span class="t" style="left:605.23px;top:265.88px;font-size:9px;line-height:9px;color:#1c1c1c;letter-spacing:-0.050px;">123</span>
<span class="t" style="left:624.90px;top:265.88px;font-size:9px;line-height:9px;color:#1c1c1c;letter-spacing:-0.306px;">Administrator</span>
<span class="t" style="left:682.60px;top:265.88px;font-size:9px;line-height:9px;color:#1c1c1c;letter-spacing:-0.345px;">C01007-</span>
<div class="r" style="left:314px;top:278.20px;width:400px;height:16.3px;background:#f1f3f9;"></div>
<div class="r" style="left:314px;top:293.70px;width:400px;height:0.8px;background:#cdd2de;"></div>
<span class="t" style="left:329.79px;top:282.18px;font-size:9px;line-height:9px;color:#1c1c1c;">3</span>
<span class="t" style="left:339.60px;top:282.18px;font-size:9px;line-height:9px;color:#1c1c1c;letter-spacing:-0.075px;">BN</span>
<span class="t" style="left:396.60px;top:282.18px;font-size:9px;line-height:9px;color:#1c1c1c;letter-spacing:-0.054px;">13.02.2017</span>
<span class="t" style="left:454.10px;top:282.18px;font-size:9px;line-height:9px;color:#1c1c1c;letter-spacing:-0.053px;">16:08:47</span>
<span class="t" style="left:511.00px;top:282.18px;font-size:9px;line-height:9px;color:#1c1c1c;letter-spacing:-0.054px;">13.02.2017</span>
<span class="t" style="left:605.23px;top:282.18px;font-size:9px;line-height:9px;color:#1c1c1c;letter-spacing:-0.050px;">123</span>
<span class="t" style="left:624.90px;top:282.18px;font-size:9px;line-height:9px;color:#1c1c1c;letter-spacing:-0.306px;">Administrator</span>
<span class="t" style="left:682.60px;top:282.18px;font-size:9px;line-height:9px;color:#1c1c1c;letter-spacing:-0.345px;">C01007-</span>
<div class="r" style="left:336.5px;top:161.5px;width:1px;height:132.6px;background:#c3c9d8;"></div>
<div class="r" style="left:336.5px;top:180px;width:1px;height:16.3px;background:#8292cc;"></div>
<div class="r" style="left:393.5px;top:161.5px;width:1px;height:132.6px;background:#c3c9d8;"></div>
<div class="r" style="left:393.5px;top:180px;width:1px;height:16.3px;background:#8292cc;"></div>
<div class="r" style="left:451.0px;top:161.5px;width:1px;height:132.6px;background:#c3c9d8;"></div>
<div class="r" style="left:451.0px;top:180px;width:1px;height:16.3px;background:#8292cc;"></div>
<div class="r" style="left:507.9px;top:161.5px;width:1px;height:132.6px;background:#c3c9d8;"></div>
<div class="r" style="left:507.9px;top:180px;width:1px;height:16.3px;background:#8292cc;"></div>
<div class="r" style="left:564.8px;top:161.5px;width:1px;height:132.6px;background:#c3c9d8;"></div>
<div class="r" style="left:564.8px;top:180px;width:1px;height:16.3px;background:#8292cc;"></div>
<div class="r" style="left:621.8px;top:161.5px;width:1px;height:132.6px;background:#c3c9d8;"></div>
<div class="r" style="left:621.8px;top:180px;width:1px;height:16.3px;background:#8292cc;"></div>
<div class="r" style="left:679.5px;top:161.5px;width:1px;height:132.6px;background:#c3c9d8;"></div>
<div class="r" style="left:679.5px;top:180px;width:1px;height:16.3px;background:#8292cc;"></div>
<svg style="left:83.1px;top:74.1px" width="9" height="11.6" viewBox="0 0 9 11.6"><defs><linearGradient id="pg" x1="0" y1="0" x2="1" y2="1"><stop offset="0.3" stop-color="#ffffff"/><stop offset="1" stop-color="#cfd8ea"/></linearGradient></defs><path d="M0.5,0.5 L5.6,0.5 L8.3,3.2 L8.3,11 L0.5,11 Z" fill="url(#pg)" stroke="#8a94aa" stroke-width="0.8"/><path d="M5.6,0.5 L5.6,3.2 L8.3,3.2" fill="#e6ebf4" stroke="#7c879c" stroke-width="0.6"/><path d="M0.9,11 L8.3,11 L8.3,3.6" fill="none" stroke="#5c6880" stroke-width="0.9"/></svg>
<svg style="left:122.3px;top:72.6px" width="14" height="14" viewBox="0 0 14 14"><defs><linearGradient id="fo" x1="0" y1="0" x2="0" y2="1"><stop offset="0" stop-color="#fae489"/><stop offset="1" stop-color="#e2a92c"/></linearGradient></defs><path d="M0.8,4.2 L4.4,4.2 L5.4,5.4 L9.8,5.4 L9.8,7.2 L0.8,7.2 Z" fill="#e9bd42" stroke="#b08424" stroke-width="0.6"/><path d="M0.8,4.6 L0.8,12.6" stroke="#b08424" stroke-width="0.8"/><path d="M0.5,12.8 L3,7 L13,7 L10.4,12.8 Z" fill="url(#fo)" stroke="#a97a20" stroke-width="0.7"/><path d="M7.2,3.8 C7.8,1.8 10.2,1.4 11.6,2.8" fill="none" stroke="#4a88d6" stroke-width="1.2"/><path d="M12.9,1.6 L12.5,4.6 L9.9,3.6 Z" fill="#3f7ed0"/></svg>
<svg style="left:193.8px;top:73.8px" width="11.6" height="11.6" viewBox="0 0 12 12"><defs><linearGradient id="fl" x1="0" y1="0" x2="1" y2="1"><stop offset="0" stop-color="#7a7ce6"/><stop offset="0.5" stop-color="#4a4cc4"/><stop offset="1" stop-color="#3436a0"/></linearGradient></defs><path d="M0.5,0.5 L11.5,0.5 L11.5,11.5 L2,11.5 L0.5,10 Z" fill="url(#fl)" stroke="#2c2e86" stroke-width="0.7"/><rect x="2.6" y="0.8" width="6.8" height="5.2" fill="#f4f6fd"/><rect x="2.6" y="3.8" width="6.8" height="2.2" fill="#cfd8f4"/><rect x="3.2" y="7.8" width="5.6" height="3.6" fill="#2a2c70"/><rect x="5.6" y="8.4" width="2.4" height="2.6" fill="#c9d0e8"/></svg>
<svg style="left:280px;top:73.8px" width="13" height="12.6" viewBox="0 0 13 12.6"><path d="M4,0.6 L11.4,0.6 L9.8,4.8 L2.2,4.8 Z" fill="#fcfdfe" stroke="#8a919e" stroke-width="0.6"/><path d="M2.2,4.8 L9.8,4.8 L12.3,3.4 L12.3,8.4 L10.2,10.2 L0.6,10.2 L0.6,6.4 Z" fill="#d9dde3" stroke="#5e6470" stroke-width="0.7"/><path d="M0.8,6.6 L10,6.6 L12.2,4.6" fill="none" stroke="#f4f6f8" stroke-width="0.8"/><path d="M1.2,10.2 L10,10.2 L9.4,12 L2,12 Z" fill="#aeb4be" stroke="#4e545e" stroke-width="0.6"/><rect x="6.6" y="7.6" width="3" height="1.7" fill="#2fae3c"/></svg>
<svg style="left:337.4px;top:73.6px" width="14.4" height="12.8" viewBox="0 0 14.4 12.8"><path d="M3,4.6 C3.4,1.6 5.6,0.6 7.8,0.6 C10.2,0.6 12.2,1.8 12.6,4.6 L12.6,6 L3,6 Z" fill="#fbfcfe" stroke="#9aa0ae" stroke-width="0.6"/><path d="M0.6,5.8 L13.6,5.8 L13.6,10.4 L0.6,10.4 Z" fill="#dfe3ea" stroke="#6e7482" stroke-width="0.7"/><path d="M1.4,10.4 L12.8,10.4 L12,12.4 L2.2,12.4 Z" fill="#b3b9c5" stroke="#666c78" stroke-width="0.6"/><rect x="3.6" y="6.4" width="7.4" height="3.4" fill="#fff" stroke="#8b93a4" stroke-width="0.5"/><path d="M3.6,6.4 L7.3,8.6 L11,6.4" fill="none" stroke="#8b93a4" stroke-width="0.5"/><rect x="10.6" y="3.6" width="2" height="1.6" fill="#d8463a"/></svg>
<svg style="left:442px;top:73px" width="14" height="13" viewBox="0 0 14 13"><path d="M0.6,0.6 L7,0.6 L9.6,3.2 L9.6,11.6 L0.6,11.6 Z" fill="#fdfdff" stroke="#7c879c" stroke-width="0.8"/><path d="M2,3.5 H7 M2,5.5 H6 M2,7.5 H5" stroke="#b7bfd0" stroke-width="0.7"/><circle cx="8.2" cy="7.4" r="2.5" fill="#dfeaf8" stroke="#6a7486" stroke-width="0.9"/><path d="M10,9.3 L12.8,12.2" stroke="#b4873a" stroke-width="1.6"/></svg>
<svg style="left:467.5px;top:74.2px" width="6" height="11" viewBox="0 0 6 11"><path d="M1.2,0.6 C2,0 4,0 4.8,0.6 C5.2,2.6 4.2,5.2 3.5,7 L2.5,7 C1.8,5.2 0.8,2.6 1.2,0.6 Z" fill="#e8472c"/><path d="M1.6,0.8 C2.2,0.5 3,0.5 3.2,0.8 C3.2,2.4 2.9,4.4 2.7,6.2 C2,4.4 1.5,2.4 1.6,0.8 Z" fill="#f59a6a"/><circle cx="3" cy="9.3" r="1.25" fill="#d2602f"/></svg>
<svg style="left:566px;top:74px" width="70" height="12" viewBox="0 0 70 12"><defs><linearGradient id="nv" x1="0" y1="0" x2="0.6" y2="1"><stop offset="0" stop-color="#6aa2ea"/><stop offset="0.55" stop-color="#2f6fd6"/><stop offset="1" stop-color="#2256b6"/></linearGradient></defs><g fill="url(#nv)" stroke="#2a60c0" stroke-width="0.4"><rect x="2" y="1.2" width="1.8" height="9.4"/><path d="M9.6,1.2 L9.6,10.6 L4,5.9 Z"/><path d="M26,1.2 L26,10.6 L20,5.9 Z"/><path d="M39.6,1.2 L39.6,10.6 L45.6,5.9 Z"/><path d="M55.2,1.2 L55.2,10.6 L60.8,5.9 Z"/><rect x="61" y="1.2" width="1.8" height="9.4"/></g></svg>
<svg style="left:643px;top:74.8px" width="10" height="11" viewBox="0 0 10 11"><path d="M0.5,0.5 L6.2,0.5 L8.8,3 L8.8,10.4 L0.5,10.4 Z" fill="#f5f7e6" stroke="#5e6660" stroke-width="0.8"/><path d="M2.4,5 C3,3.2 5.6,3 6.6,4.4" fill="none" stroke="#7fa63a" stroke-width="1"/><path d="M7.2,6.4 C6.4,8.2 4,8.4 2.8,7" fill="none" stroke="#7fa63a" stroke-width="1"/><path d="M7.6,3.2 L7.2,5.4 L5.4,4.6 Z M2,8.2 L2.4,6 L4.2,6.8 Z" fill="#7fa63a"/></svg>
<div class="red" style="left:78px;top:56.3px;width:43.8px;height:34.9px;border-width:3.1px"></div>
<div class="red" style="left:-1.3px;top:89.2px;width:87.3px;height:38.1px;border-width:3.3px"></div>
<div class="red" style="left:457.8px;top:56px;width:103.9px;height:41.6px;border-width:3.3px"></div>
<div class="red" style="left:69px;top:315px;width:62.3px;height:30.7px;border-width:3.3px"></div>
<div class="red" style="left:-1.5px;top:397px;width:82.2px;height:66.4px;border-width:3.3px"></div>
</div></body></html>
